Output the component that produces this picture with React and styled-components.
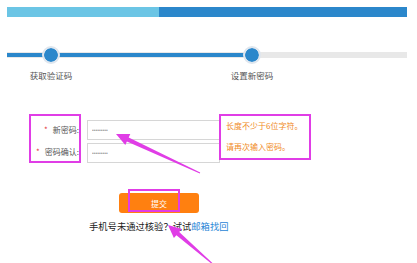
import React from "react";
import styled, { createGlobalStyle } from "styled-components";

const Global = createGlobalStyle`
  html, body { margin: 0; padding: 0; background: #fff; }
  body { font-family: "Noto Sans CJK SC", "Noto Sans", sans-serif; color: #333; }
`;

const MAGENTA = "#e03de6";

const Page = styled.div`
  position: relative;
  width: 417px;
  height: 263px;
  overflow: hidden;
  padding-top: 7px;
  box-sizing: border-box;
`;

const TopBar = styled.div`
  display: flex;
  margin: 0 10px 0 7px;
  height: 10px;
`;

const BarPart = styled.div`
  background: ${(p) => p.$color};
  width: ${(p) => (p.$w ? p.$w + "px" : "auto")};
  flex: ${(p) => (p.$w ? "none" : "1")};
`;

const Steps = styled.div`
  position: relative;
  display: flex;
  gap: 113px;
  margin: 29px 10px 0 7px;
`;

const Track = styled.div`
  position: absolute;
  left: 0;
  right: 0;
  top: 6px;
  height: 6px;
  background: #e8e8e8;
`;

const TrackFill = styled.div`
  height: 4px;
  margin-top: 1px;
  width: ${(p) => p.$w}px;
  background: #2b87cb;
`;

const Step = styled.div`
  position: relative;
  width: 88px;
  display: flex;
  flex-direction: column;
  align-items: center;
`;

const Dot = styled.div`
  width: 18px;
  height: 18px;
  box-sizing: border-box;
  border-radius: 50%;
  border: 2px solid #dfe6ee;
  background: #2b87cb;
  background-clip: padding-box;
`;

const StepLabel = styled.div`
  margin-top: 6px;
  font-size: 8.5px;
  line-height: 10px;
  color: #555;
  white-space: nowrap;
`;

const Form = styled.div`
  display: flex;
  align-items: flex-start;
  margin: 34px 0 0 29px;
`;

const LabelBox = styled.div`
  width: 52px;
  height: 49px;
  box-sizing: border-box;
  border: 2px solid ${MAGENTA};
  padding-top: 4px;
  display: flex;
  flex-direction: column;
  gap: 3px;
`;

const Label = styled.div`
  height: 20px;
  display: flex;
  align-items: center;
  justify-content: flex-end;
  font-size: 8px;
  color: #555;
  white-space: nowrap;
`;

const Star = styled.span`
  color: #e4393c;
  margin-right: 5px;
`;

const InputCol = styled.div`
  display: flex;
  flex-direction: column;
  gap: 3px;
  margin: 6px 0 0 6px;
`;

const Input = styled.input`
  width: 133px;
  height: 20px;
  box-sizing: border-box;
  border: 1px solid #d6d6d6;
  padding: 0 0 0 4px;
  font-size: 5px;
  color: #999;
  outline: none;
  background: #fff;
`;

const HintBox = styled.div`
  width: 92px;
  height: 46px;
  box-sizing: border-box;
  border: 2px solid ${MAGENTA};
  margin: 0 0 0 -1px;
  padding: 5px 0 0 5px;
  display: flex;
  flex-direction: column;
  gap: 11px;
  background: #fff;
  position: relative;
`;

const Hint = styled.div`
  font-size: 8px;
  line-height: 10px;
  color: #f08a24;
  white-space: nowrap;
`;

const Button = styled.div`
  position: relative;
  width: 80px;
  height: 20px;
  margin: 30px 0 0 119px;
  background: #ff8010;
  border-radius: 3px;
  color: #fff;
  font-size: 8px;
  display: flex;
  align-items: center;
  justify-content: center;
`;

const Highlight = styled.div`
  position: absolute;
  left: 9px;
  top: -4px;
  width: 52px;
  height: 23px;
  box-sizing: border-box;
  border: 2px solid ${MAGENTA};
`;

const Footer = styled.div`
  margin: 7px 0 0 89px;
  font-size: 9.3px;
  line-height: 12px;
  color: #222;
  white-space: nowrap;
`;

const Link = styled.span`
  color: #2a86d6;
`;

const Overlay = styled.svg`
  position: absolute;
  left: 0;
  top: 0;
  pointer-events: none;
`;

function arrowPoints(tx, ty, px, py) {
  const dx = px - tx, dy = py - ty;
  const len = Math.hypot(dx, dy);
  const ux = dx / len, uy = dy / len;
  const nx = -uy, ny = ux;
  const head = 13, hw = 6, sw = 2.2, tw = 0.4;
  const bx = px - ux * head, by = py - uy * head;
  const pts = [
    [tx + nx * tw, ty + ny * tw],
    [bx + nx * sw, by + ny * sw],
    [bx + nx * hw, by + ny * hw],
    [px, py],
    [bx - nx * hw, by - ny * hw],
    [bx - nx * sw, by - ny * sw],
    [tx - nx * tw, ty - ny * tw],
  ];
  return pts.map((p) => p.map((v) => v.toFixed(1)).join(",")).join(" ");
}

export default function App() {
  return (
    <>
      <Global />
      <Page>
        <TopBar>
          <BarPart $color="#6bc5e5" $w={152} />
          <BarPart $color="#2b87cb" />
        </TopBar>
        <Steps>
          <Track>
            <TrackFill $w={245} />
          </Track>
          <Step>
            <Dot />
            <StepLabel>获取验证码</StepLabel>
          </Step>
          <Step>
            <Dot />
            <StepLabel>设置新密码</StepLabel>
          </Step>
        </Steps>
        <Form>
          <LabelBox>
            <Label><Star>*</Star>新密码:</Label>
            <Label><Star>*</Star>密码确认:</Label>
          </LabelBox>
          <InputCol>
            <Input type="password" defaultValue="123456789" readOnly />
            <Input type="password" defaultValue="123456789" readOnly />
          </InputCol>
          <HintBox>
            <Hint>长度不少于6位字符。</Hint>
            <Hint>请再次输入密码。</Hint>
          </HintBox>
        </Form>
        <Button>
          提交
          <Highlight />
        </Button>
        <Footer>
          手机号未通过核验？试试<Link>邮箱找回</Link>
        </Footer>
        <Overlay width="417" height="263" viewBox="0 0 417 263">
          <polygon points={arrowPoints(200, 173, 116, 134)} fill={MAGENTA} />
          <polygon points={arrowPoints(215, 266, 168, 225)} fill={MAGENTA} />
        </Overlay>
      </Page>
    </>
  );
}
